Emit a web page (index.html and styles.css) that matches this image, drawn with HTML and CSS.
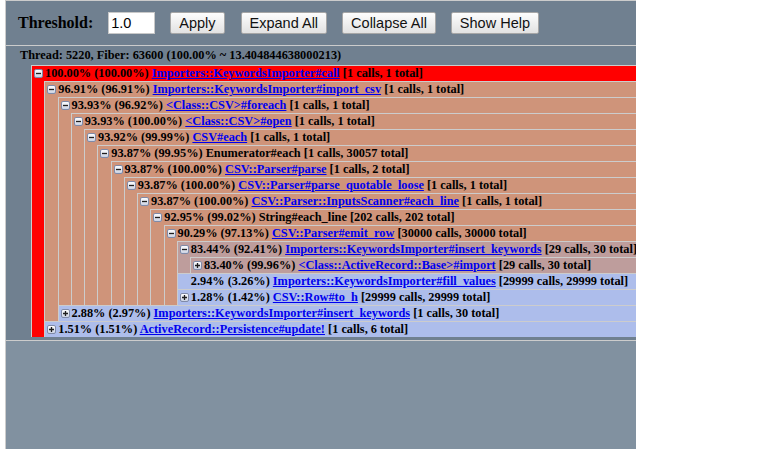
FILE: index.html
```html
<!DOCTYPE html>
<html>
<head>
<meta charset="utf-8">
<title>Call stack</title>
<link rel="stylesheet" href="styles.css">
</head>
<body>
<svg class="defs" width="0" height="0" aria-hidden="true">
  <defs>
    <linearGradient id="ig" x1="0" y1="0" x2="0" y2="1">
      <stop offset="0" stop-color="#ffffff"/>
      <stop offset="1" stop-color="#c9d0e2"/>
    </linearGradient>
    <symbol id="minus" viewBox="0 0 9 9">
      <rect x="0.5" y="0.5" width="8" height="8" rx="1.5" fill="url(#ig)" stroke="#7f8aa8"/>
      <path d="M2 4.5h5" stroke="#1e1e1e" stroke-width="1.3"/>
    </symbol>
    <symbol id="plus" viewBox="0 0 9 9">
      <rect x="0.5" y="0.5" width="8" height="8" rx="1.5" fill="url(#ig)" stroke="#7f8aa8"/>
      <path d="M2 4.5h5M4.5 2v5" stroke="#1e1e1e" stroke-width="1.3"/>
    </symbol>
  </defs>
</svg>
<div class="page">
  <div class="commands">
    <span class="label">Threshold:</span>
    <input class="field" type="text" value="1.0">
    <button class="btn">Apply</button>
    <button class="btn btn-wide">Expand All</button>
    <button class="btn">Collapse All</button>
    <button class="btn">Show Help</button>
  </div>
  <div class="thread">
    <div class="title">Thread: 5220, Fiber: 63600 (100.00% ~ 13.404844638000213)</div>
    <ul class="tree">
      <li class="c10">
        <div class="row"><svg class="icon"><use href="#minus"/></svg>100.00% (100.00%) <a href="#">Importers::KeywordsImporter#call</a> [1 calls, 1 total]</div>
        <ul>
          <li class="c9">
            <div class="row"><svg class="icon"><use href="#minus"/></svg>96.91% (96.91%) <a href="#">Importers::KeywordsImporter#import_csv</a> [1 calls, 1 total]</div>
            <ul>
              <li class="c9">
                <div class="row"><svg class="icon"><use href="#minus"/></svg>93.93% (96.92%) <a href="#">&lt;Class::CSV&gt;#foreach</a> [1 calls, 1 total]</div>
                <ul>
                  <li class="c9">
                    <div class="row"><svg class="icon"><use href="#minus"/></svg>93.93% (100.00%) <a href="#">&lt;Class::CSV&gt;#open</a> [1 calls, 1 total]</div>
                    <ul>
                      <li class="c9">
                        <div class="row"><svg class="icon"><use href="#minus"/></svg>93.92% (99.99%) <a href="#">CSV#each</a> [1 calls, 1 total]</div>
                        <ul>
                          <li class="c9">
                            <div class="row"><svg class="icon"><use href="#minus"/></svg>93.87% (99.95%) Enumerator#each [1 calls, 30057 total]</div>
                            <ul>
                              <li class="c9">
                                <div class="row"><svg class="icon"><use href="#minus"/></svg>93.87% (100.00%) <a href="#">CSV::Parser#parse</a> [1 calls, 2 total]</div>
                                <ul>
                                  <li class="c9">
                                    <div class="row"><svg class="icon"><use href="#minus"/></svg>93.87% (100.00%) <a href="#">CSV::Parser#parse_quotable_loose</a> [1 calls, 1 total]</div>
                                    <ul>
                                      <li class="c9">
                                        <div class="row"><svg class="icon"><use href="#minus"/></svg>93.87% (100.00%) <a href="#">CSV::Parser::InputsScanner#each_line</a> [1 calls, 1 total]</div>
                                        <ul>
                                          <li class="c9">
                                            <div class="row"><svg class="icon"><use href="#minus"/></svg>92.95% (99.02%) String#each_line [202 calls, 202 total]</div>
                                            <ul>
                                              <li class="c9">
                                                <div class="row"><svg class="icon"><use href="#minus"/></svg>90.29% (97.13%) <a href="#">CSV::Parser#emit_row</a> [30000 calls, 30000 total]</div>
                                                <ul>
                                                  <li class="c8">
                                                    <div class="row"><svg class="icon"><use href="#minus"/></svg>83.44% (92.41%) <a href="#">Importers::KeywordsImporter#insert_keywords</a> [29 calls, 30 total]</div>
                                                    <ul>
                                                      <li class="c8">
                                                        <div class="row"><svg class="icon"><use href="#plus"/></svg>83.40% (99.96%) <a href="#">&lt;Class::ActiveRecord::Base&gt;#import</a> [29 calls, 30 total]</div>
                                                      </li>
                                                    </ul>
                                                  </li>
                                                  <li class="c01">
                                                    <div class="row"><span class="spacer"></span>2.94% (3.26%) <a href="#">Importers::KeywordsImporter#fill_values</a> [29999 calls, 29999 total]</div>
                                                  </li>
                                                  <li class="c01">
                                                    <div class="row"><svg class="icon"><use href="#plus"/></svg>1.28% (1.42%) <a href="#">CSV::Row#to_h</a> [29999 calls, 29999 total]</div>
                                                  </li>
                                                </ul>
                                              </li>
                                            </ul>
                                          </li>
                                        </ul>
                                      </li>
                                    </ul>
                                  </li>
                                </ul>
                              </li>
                            </ul>
                          </li>
                        </ul>
                      </li>
                    </ul>
                  </li>
                </ul>
              </li>
              <li class="c01">
                <div class="row"><svg class="icon"><use href="#plus"/></svg>2.88% (2.97%) <a href="#">Importers::KeywordsImporter#insert_keywords</a> [1 calls, 30 total]</div>
              </li>
            </ul>
          </li>
          <li class="c01">
            <div class="row"><svg class="icon"><use href="#plus"/></svg>1.51% (1.51%) <a href="#">ActiveRecord::Persistence#update!</a> [1 calls, 6 total]</div>
          </li>
        </ul>
      </li>
    </ul>
  </div>
  <div class="sentinel"></div>
</div>
</body>
</html>
```

FILE: styles.css
```css
html, body {
  margin: 0;
  padding: 0;
  background: #ffffff;
}

body {
  font-family: "Liberation Serif", "Times New Roman", serif;
  color: #000;
}

.defs {
  position: absolute;
  width: 0;
  height: 0;
  overflow: hidden;
}

.page {
  margin-left: 5px;
  width: 630px;
  border-left: 1px solid #cccccc;
  border-top: 1px solid #cccccc;
  background: #708090;
}

.commands {
  height: 44px;
  display: flex;
  align-items: center;
  gap: 15px;
  padding-left: 12px;
}

.label {
  font-size: 16px;
  font-weight: bold;
  line-height: 20px;
}

.field {
  box-sizing: border-box;
  width: 47px;
  height: 22px;
  margin: 0;
  padding: 0 2px;
  border: 1px solid #c8c8c8;
  background: #fff;
  font-family: "Liberation Sans", Arial, sans-serif;
  font-size: 14.5px;
  color: #000;
  outline: none;
}

.btn {
  box-sizing: border-box;
  height: 22px;
  margin: 0;
  padding: 0 8px;
  border: 1px solid #a6a6a6;
  border-radius: 2px;
  background: linear-gradient(#fdfdfd, #e2e2e2);
  font-family: "Liberation Sans", Arial, sans-serif;
  font-size: 14.5px;
  color: #111;
  line-height: 20px;
}

.btn-wide {
  margin-left: 1px;
}

.thread {
  border-top: 1px solid #cccccc;
  padding-bottom: 3px;
}

.title {
  padding: 2px 0 2px 14px;
  font-size: 12.32px;
  font-weight: bold;
  line-height: 15px;
  white-space: nowrap;
}

ul {
  list-style: none;
  margin: 0;
  padding: 0;
}

.tree {
  margin-left: 25px;
}

li ul {
  margin-left: 12.25px;
}

li {
  border-top: 1px solid #cccccc;
  border-left: 1px solid #cccccc;
}

.c10 { background: #ff0000; }
.c9 { background: #cf947a; }
.c8 { background: #be9d9c; }
.c01 { background: #adbdeb; }

.row {
  height: 15px;
  line-height: 15px;
  padding-left: 2px;
  font-size: 12.32px;
  font-weight: bold;
  white-space: nowrap;
  overflow: hidden;
}

.row a {
  color: #0000ee;
  text-decoration: underline;
}

.icon,
.spacer {
  display: inline-block;
  width: 9px;
  height: 9px;
  margin-right: 2px;
  vertical-align: -1px;
}

.sentinel {
  border-top: 1px solid #cccccc;
  height: 120px;
  background: #8191a0;
}
```
